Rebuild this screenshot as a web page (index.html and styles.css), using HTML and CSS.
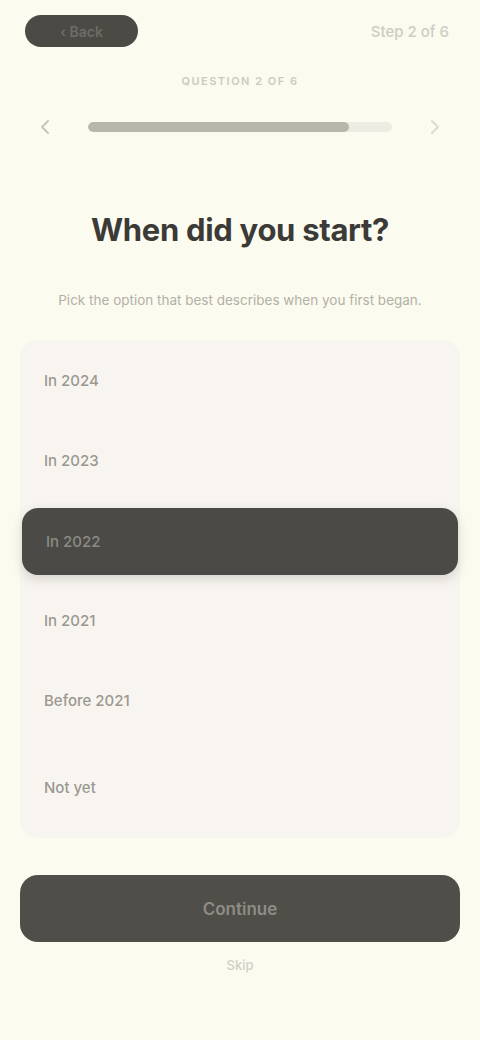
FILE: index.html
```html
<!DOCTYPE html>
<html lang="en">
<head>
<meta charset="utf-8">
<title>When did you start?</title>
<link rel="stylesheet" href="styles.css">
</head>
<body>
<div class="screen">
  <header class="topbar">
    <button class="back-pill">‹ Back</button>
    <span class="step">Step 2 of 6</span>
  </header>

  <div class="progress-block">
    <div class="progress-label">QUESTION 2 OF 6</div>
    <div class="progress-row">
      <span class="chev">
        <svg width="10" height="14" viewBox="0 0 10 14"><path d="M8 1L2 7l6 6" fill="none" stroke="#c9c6bb" stroke-width="2" stroke-linecap="round" stroke-linejoin="round"/></svg>
      </span>
      <div class="track"><div class="fill" style="width:86%"></div></div>
      <span class="chev">
        <svg width="10" height="14" viewBox="0 0 10 14"><path d="M2 1l6 6-6 6" fill="none" stroke="#dedbd0" stroke-width="2" stroke-linecap="round" stroke-linejoin="round"/></svg>
      </span>
    </div>
  </div>

  <h1 class="title">When did you start?</h1>
  <p class="subtitle">Pick the option that best describes when you first began.</p>

  <ul class="options">
    <li class="option">In 2024</li>
    <li class="option">In 2023</li>
    <li class="option selected">In 2022</li>
    <li class="option">In 2021</li>
    <li class="option">Before 2021</li>
    <li class="option">Not yet</li>
  </ul>

  <div class="footer">
    <button class="continue">Continue</button>
    <span class="skip">Skip</span>
  </div>
</div>
</body>
</html>
```

FILE: styles.css
```css
* { box-sizing: border-box; }
html, body {
  margin: 0;
  padding: 0;
  background: #fbfbf0;
}
body {
  font-family: Inter, "Noto Sans", "Liberation Sans", sans-serif;
  color: #33322e;
}
.screen {
  width: 480px;
  height: 1040px;
  display: flex;
  flex-direction: column;
  padding: 0 20px;
}
.topbar {
  display: flex;
  justify-content: space-between;
  align-items: center;
  padding: 15px 5px 0 5px;
  height: 47px;
}
.back-pill {
  width: 113px;
  height: 32px;
  border: none;
  border-radius: 16px;
  background: #4b4a45;
  color: #6e6c66;
  font-family: inherit;
  font-size: 14px;
  font-weight: 600;
}
.step {
  font-size: 15px;
  color: #cfccc1;
  font-weight: 500;
  padding-right: 6px;
}
.progress-block {
  display: flex;
  flex-direction: column;
  align-items: center;
  margin-top: 27px;
}
.progress-label {
  font-size: 11px;
  letter-spacing: 1.5px;
  color: #cdcabf;
  font-weight: 600;
}
.progress-row {
  display: flex;
  align-items: center;
  gap: 38px;
  margin-top: 32px;
  width: 100%;
  padding: 0 20px;
}
.chev { display: flex; align-items: center; }
.track {
  flex: 1;
  height: 10px;
  border-radius: 5px;
  background: #eeece2;
  overflow: hidden;
}
.fill {
  height: 100%;
  background: #b9b6ab;
  border-radius: 5px;
}
.title {
  margin: 77px 0 0 0;
  text-align: center;
  font-size: 31px;
  font-weight: 700;
  color: #3b3a36;
  letter-spacing: -0.3px;
}
.subtitle {
  margin: 44px 0 0 0;
  text-align: center;
  font-size: 13.5px;
  color: #b3b0a6;
}
.options {
  list-style: none;
  margin: 32px 0 0 0;
  padding: 0 0 8px 0;
  background: #f8f5f0;
  border-radius: 18px;
  display: flex;
  flex-direction: column;
}
.option {
  height: 80px;
  display: flex;
  align-items: center;
  padding-left: 24px;
  font-size: 15px;
  font-weight: 500;
  color: #9b9890;
  border-radius: 16px;
}
.option:last-child {
  height: 90px;
  padding-top: 4px;
}
.option.selected {
  height: 67px;
  margin: 8px 2px 5px 2px;
  background: #4b4a46;
  color: #8c8a84;
  box-shadow: 0 4px 12px rgba(60, 58, 52, 0.18);
}
.footer {
  margin-top: auto;
  padding-bottom: 67px;
  display: flex;
  flex-direction: column;
  align-items: center;
  gap: 15px;
}
.continue {
  width: 100%;
  height: 67px;
  border: none;
  border-radius: 18px;
  background: #4f4e49;
  color: #8e8c86;
  font-family: inherit;
  font-size: 17px;
  font-weight: 600;
}
.skip {
  font-size: 13px;
  color: #d2cfc4;
  font-weight: 500;
}
```
